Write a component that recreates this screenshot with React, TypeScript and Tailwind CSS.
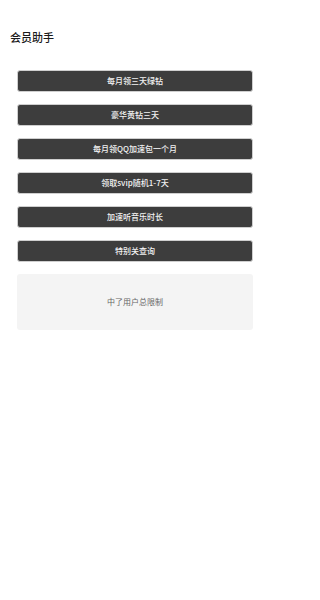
const items = [
  "每月领三天绿钻",
  "豪华黄钻三天",
  "每月领QQ加速包一个月",
  "领取svip随机1-7天",
  "加速听音乐时长",
  "特别关查询",
];

export default function App() {
  return (
    <div
      className="min-h-[600px] w-[270px] bg-white"
      style={{ fontFamily: '"Noto Sans CJK SC", "Noto Sans", sans-serif' }}
    >
      <div className="pl-[10px] pt-[31px] text-[11px] font-medium leading-[12px] text-[#1a1a1a]">
        会员助手
      </div>

      <div className="mt-[27px] flex flex-col gap-[12px] px-[17px]">
        {items.map((label) => (
          <button
            key={label}
            className="flex h-[22px] w-full items-center justify-center rounded-[3px] border border-[#cfcfcf] bg-[#3d3d3d] text-[8px] font-medium leading-none text-[#f2f2f2]"
          >
            {label}
          </button>
        ))}

        <div className="flex h-[56px] items-center justify-center rounded-[3px] bg-[#f4f4f4] text-[8px] text-[#666]">
          中了用户总限制
        </div>
      </div>
    </div>
  );
}
